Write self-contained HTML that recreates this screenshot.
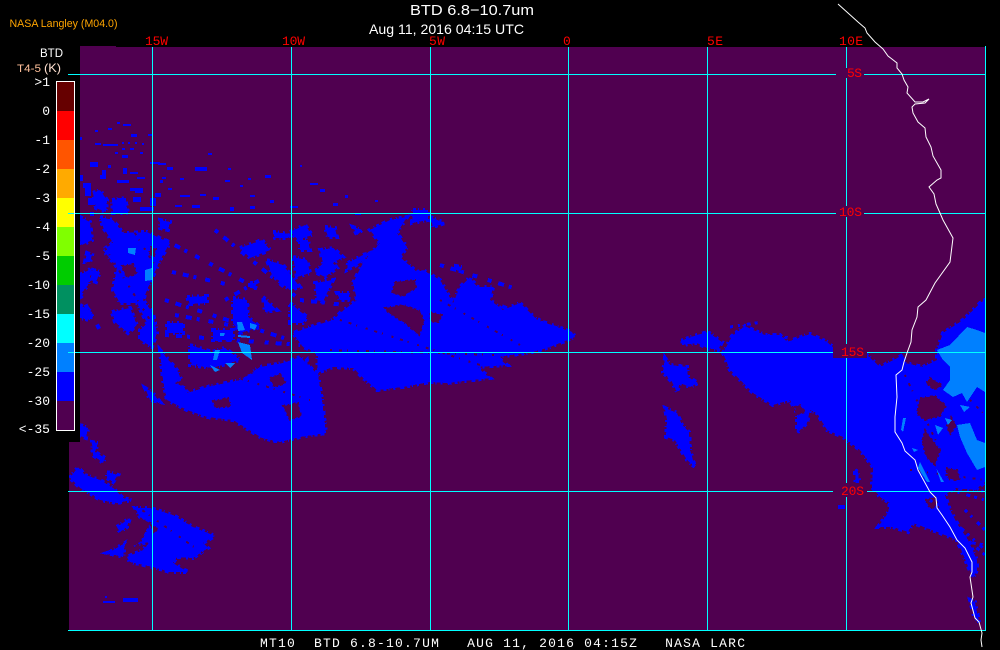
<!DOCTYPE html>
<html><head><meta charset="utf-8"><style>
html,body{margin:0;padding:0;background:#000;width:1000px;height:650px;overflow:hidden}
svg{display:block}
text{font-family:"Liberation Sans",sans-serif;fill:#fff}
.m{font-family:"Liberation Mono",monospace;font-size:13px}
.r{fill:#f00}
</style></head><body>
<svg width="1000" height="650" viewBox="0 0 1000 650" xmlns="http://www.w3.org/2000/svg">
<defs><clipPath id="map"><path d="M80 46H116V47H985V630H69V442H80Z"/></clipPath></defs>
<rect width="1000" height="650" fill="#000"/>
<g shape-rendering="crispEdges">
<path fill="#500050" d="M80 46H116V47H985V630H69V442H80Z"/>
<g clip-path="url(#map)">
<!-- blue masses -->
<g fill="#00f" stroke="#00f" stroke-width="4" stroke-dasharray="3 2 1 4 2 5 4 3">
<path d="M318 353L317 373L333 367L353 368L362 377L377 390L403 387L430 382L447 383L490 378L477 367L507 365L497 357L533 352L550 347L575 337L572 332L537 320L520 303L503 310L490 300L493 287L477 287L470 277L460 287L453 303L440 280L423 270L417 272L400 257L407 247L397 233L407 217L390 220L370 230L380 243L363 263L353 283L357 300L340 313L333 320L310 327L293 333L303 347Z"/>
<path d="M100 217L113 220L123 233L147 232L170 243L160 260L150 283L143 300L153 313L157 333L152 347L140 340L140 330L147 323L137 303L120 303L113 290L117 267L103 250L113 243L103 227Z"/>
<path d="M112 312L130 308L137 325L128 333L115 322Z"/>
<path d="M160 350L177 370L187 393L207 387L240 380L260 367L283 363L300 357L318 375L322 400L326 433L300 437L280 442L262 438L233 420L207 417L187 410L167 400L163 380Z"/>
<path d="M145 388L152 392L160 402L150 400Z"/>
<path d="M233 298L247 300L248 317L260 327L240 333L233 323Z"/>
<path d="M263 297L277 310L265 312Z"/>
<path d="M267 260L283 265L300 287L290 290L272 275Z"/>
<path d="M80 217L90 222L92 240L82 245L80 240Z"/>
<path d="M80 275L92 268L88 285L80 295Z"/>
<path d="M80 305L92 312L90 320L80 318Z"/>
<path d="M87 253L92 255L90 262L85 262Z"/>
<path d="M93 270L100 272L96 282L90 280Z"/>
<path d="M187 297L207 296L207 303L190 304Z"/>
<path d="M213 330L233 330L233 340L213 340Z"/>
<path d="M167 323L183 323L183 333L167 333Z"/>
<path d="M190 345L212 352L225 348L240 360L212 368L190 365Z"/>
<path d="M273 232L290 234L288 238L275 238Z"/>
<path d="M160 220L170 222L168 230L160 228Z"/>
<path d="M250 283L256 283L255 288L250 288Z"/>
<path d="M325 227L335 228L337 237L328 237Z"/>
<path d="M300 240L308 240L310 250L300 250Z"/>
<path d="M320 250L333 248L343 257L333 263L337 268L325 277L315 272L323 263Z"/>
<path d="M293 257L307 260L310 273L297 277Z"/>
<path d="M353 227L362 230L357 235Z"/>
<path d="M315 283L333 280L323 302L317 300Z"/>
<path d="M337 293L350 293L348 300L340 300Z"/>
<path d="M290 303L307 317L303 323L290 323Z"/>
<path d="M348 263L363 255L370 253L360 263L347 270Z"/>
<path d="M293 373L307 360L310 377L318 397L297 397Z"/>
<path d="M430 217L445 223L433 227Z"/>
<path d="M413 210L428 210L428 220L412 223Z"/>
<path d="M456 266L462 267L460 271L456 270Z"/>
<path d="M290 232L305 225L312 235L298 240Z"/>
<path d="M240 248L262 240L270 250L250 258Z"/>
<path d="M93 193L100 190L107 200L106 212L96 208Z"/>
<path d="M112 200L125 198L128 213L113 213Z"/>
<path d="M665 358L670 365L687 367L688 377L698 383L690 387L680 383L677 392L672 382L663 372Z"/>
<path d="M665 408L677 413L682 425L689 432L690 450L695 467L687 460L675 440L666 437L667 420Z"/>
<path d="M708 332L722 342L718 350L707 348L697 343L682 345L683 340L697 335Z"/>
<path d="M723 353L732 336L745 326L753 330L765 335L780 335L787 342L810 334L827 342L840 353L867 355L880 367L903 355L905 363L923 367L937 360L937 350L943 333L963 320L980 303L985 300V482L975 490L955 488L945 495L950 510L958 525L968 540L977 560L977 570L973 578L957 540L940 533L913 523L908 532L893 527L878 527L888 513L890 503L880 497L872 487L873 467L860 450L843 437L827 430L817 413L810 410L807 423L797 433L797 413L790 400L773 405L753 393L740 380L730 370Z"/>
<path d="M970 600L975 602L979 622L974 616Z"/>
<path d="M855 470L858 472L860 490L856 490Z"/>
<path d="M70 478L78 467L85 475L100 480L113 488L123 498L132 500L117 503L100 500L93 495L80 488Z"/>
<path d="M107 472L118 475L113 482L107 478Z"/>
<path d="M92 442L98 443L95 452L105 458L103 463L93 455Z"/>
<path d="M80 425L88 428L86 438L80 436Z"/>
<path d="M135 508L150 508L173 515L193 527L215 536L203 543L208 548L193 558L177 557L173 563L188 572L170 572L153 567L130 562L127 557L143 550L150 542L133 545L140 535L148 523L140 517Z"/>
<path d="M117 527L130 518L127 527L120 532Z"/>
<path d="M110 552L125 543L123 557L107 553Z"/>
</g>
<path fill="#00f" d="M103 601h12v2h-12zM123 598h15v4h-15zM105 596h2v2h-2zM838 505h7v4h-7z"/>
<!-- hand-placed top-left speckle -->
<path fill="#00f" d="M117 122h3v2h-3zM123 124h8v2h-8zM108 128h4v2h-4zM131 134h6v3h-6zM148 134h5v2h-5zM80 137h2v3h-2zM95 143h6v2h-6zM103 144h15v2h-15zM122 142h2v2h-2zM128 142h2v2h-2zM135 142h2v2h-2zM142 143h2v2h-2zM122 148h3v2h-3zM130 148h4v2h-4zM140 152h3v2h-3zM122 155h6v3h-6zM115 152h3v2h-3zM90 162h8v5h-8zM108 165h3v3h-3zM123 168h4v6h-4zM130 172h8v2h-8zM102 170h4v6h-4zM100 175h6v4h-6zM80 175h3v6h-3zM83 183h8v5h-8zM117 180h12v3h-12zM137 177h8v2h-8zM150 162h10v2h-10zM158 163h8v2h-8zM167 167h6v3h-6zM195 167h12v4h-12zM208 153h4v2h-4zM180 178h4v2h-4zM162 177h4v2h-4zM265 175h6v3h-6zM310 183h8v2h-8zM320 189h5v3h-5zM333 203h5v3h-5zM355 213h6v2h-6zM130 188h6v3h-6zM135 188h8v5h-8zM118 198h8v4h-8zM133 197h8v5h-8zM150 198h6v8h-6zM155 193h6v4h-6zM140 207h14v4h-14zM168 188h4v2h-4zM180 195h10v2h-10zM200 194h6v2h-6zM213 197h6v3h-6zM230 207h4v4h-4zM248 178h3v2h-3zM290 206h8v2h-8zM95 130h3v2h-3zM85 188h6v8h-6zM88 198h7v7h-7zM160 180h3v3h-3zM225 180h5v2h-5zM240 185h3v2h-3zM250 195h5v2h-5zM270 200h4v3h-4zM175 205h7v2h-7zM192 205h8v3h-8zM250 206h5v3h-5zM300 165h2v2h-2zM228 168h3v2h-3zM345 195h3v3h-3zM375 200h3v2h-3zM90 212h4v4h-4z"/>
<!-- holes -->
<g fill="#500050" stroke="#500050" stroke-width="2" stroke-dasharray="2 3 1 4 3 2">
<path d="M395 282L415 280L416 288L403 296L392 293Z"/>
<path d="M385 308L403 305L420 311L424 322L419 335L405 323L389 313Z"/>
<path d="M430 312L442 315L438 323L431 321Z"/>
<path d="M920 398L935 396L946 406L940 416L925 420L917 414Z"/>
<path d="M925 430L932 440L940 450L935 465L927 458L922 442Z"/>
<path d="M946 468L957 470L960 480L949 480Z"/>
<path d="M930 378L942 385L935 390L926 383Z"/>
<path d="M951 417L956 425L950 435L947 425Z"/>
<path d="M925 500L935 497L938 507L930 508Z"/>
<path d="M177 383L189 375L196 380L187 387Z"/>
<path d="M238 372L248 368L254 372L242 377Z"/>
<path d="M270 378L280 374L286 383L274 387Z"/>
<path d="M213 401L228 398L231 406L216 408Z"/>
<path d="M283 406L298 403L301 416L290 420Z"/>
<path d="M122 266L133 264L137 274L126 277Z"/>
<path d="M151 247L156 249L154 256L149 254Z"/>
<path d="M140 518L150 523L140 542L128 549L125 545L135 530Z"/>
<path d="M150 525L158 528L154 533Z"/>
<path d="M795 407L800 405L805 412L797 415Z"/>
</g>
<!-- fuzz -->
<g fill="none" stroke="#00f">
<path stroke-width="4" stroke-dasharray="4 7 6 5 3 9 5 11" d="M165 300L290 340M165 335L300 345M215 230L300 300M165 240L260 290M172 272L230 285M80 295L100 330M225 300L260 280M175 315L230 325M300 300L345 305M440 265L520 290M470 295L540 320M520 315L575 335"/>
<path stroke-width="3" stroke-dasharray="3 5 2 7 4 4" d="M730 327L762 322M735 332L790 338M930 500L985 550M945 520L985 555M950 490L985 500M965 510L985 530M950 480L985 492M955 540L985 545"/>
</g>
<g fill="none" stroke="#500050">
<path stroke-width="2" stroke-dasharray="2 7 3 5 1 9" d="M330 350L500 355M340 320L480 365M440 300L520 345M905 375L940 450M970 400L985 415M910 470L985 480M180 360L310 400M130 225L170 290M135 505L205 555M100 240L150 320"/>
</g>
<!-- lighter blue -->
<g fill="#0080ff">
<path d="M937 350L950 345L967 327L977 330L985 333V392L977 387L967 402L962 393L953 397L943 390L950 380L950 367L943 360Z"/>
<path d="M957 425L970 423L977 440L985 443V467L977 470L967 453L960 437Z"/>
<path d="M128 248L136 248L135 255L128 253Z"/>
<path d="M145 270L152 268L152 280L145 281Z"/>
<path d="M237 322L242 322L245 330L238 331Z"/>
<path d="M250 323L257 325L255 330L250 328Z"/>
<path d="M238 342L250 345L252 360L242 353Z"/>
<path d="M215 350L220 350L217 360L213 360Z"/>
<path d="M225 363L235 363L230 368Z"/>
<path d="M210 365L220 370L215 372Z"/>
<path d="M220 333L225 333L224 336L220 336Z"/>
<path d="M238 335L250 336L250 338L238 337Z"/>
<path d="M903 418L906 418L903 432L901 430Z"/>
<path d="M912 448L918 450L914 452Z"/>
<path d="M920 462L930 482L927 482L918 468Z"/>
<path d="M936 468L944 482L941 482Z"/>
<path d="M935 425L943 428L938 435Z"/>
<path d="M945 418L952 420L948 425Z"/>
<path d="M960 405L970 407L964 412Z"/>
</g>
</g>
<!-- grid -->
<g fill="#0ff">
<rect x="68" y="74" width="917" height="1"/>
<rect x="68" y="213" width="917" height="1"/>
<rect x="68" y="352" width="917" height="1"/>
<rect x="68" y="491" width="917" height="1"/>
<rect x="68" y="630" width="918" height="1"/>
<rect x="152" y="47" width="1" height="584"/>
<rect x="291" y="47" width="1" height="584"/>
<rect x="430" y="47" width="1" height="584"/>
<rect x="568" y="47" width="1" height="584"/>
<rect x="707" y="47" width="1" height="584"/>
<rect x="846" y="47" width="1" height="584"/>
<rect x="985" y="46" width="1" height="585"/>
</g>
<!-- label boxes -->
<g fill="#500050">
<rect x="836" y="68" width="28" height="10"/>
<rect x="836" y="206" width="28" height="11"/>
<rect x="833" y="344" width="34" height="14"/>
<rect x="833" y="483" width="34" height="14"/>
</g>
<!-- colour bar -->
<rect x="56" y="81" width="19" height="350" fill="#fff"/>
<rect x="57" y="82" width="17" height="29" fill="#660000"/>
<rect x="57" y="111" width="17" height="29" fill="#f00"/>
<rect x="57" y="140" width="17" height="29" fill="#f50"/>
<rect x="57" y="169" width="17" height="29" fill="#fa0"/>
<rect x="57" y="198" width="17" height="29" fill="#ff0"/>
<rect x="57" y="227" width="17" height="29" fill="#80ff00"/>
<rect x="57" y="256" width="17" height="29" fill="#0c0"/>
<rect x="57" y="285" width="17" height="29" fill="#009060"/>
<rect x="57" y="314" width="17" height="29" fill="#0ff"/>
<rect x="57" y="343" width="17" height="29" fill="#0080ff"/>
<rect x="57" y="372" width="17" height="29" fill="#00f"/>
<rect x="57" y="401" width="17" height="29" fill="#500050"/>
<rect x="68" y="213" width="6" height="1" fill="#0ff"/>
<rect x="68" y="352" width="6" height="1" fill="#0ff"/>
</g>
<!-- coast -->
<path fill="none" stroke="#fff" stroke-width="1" d="M838 4L848 13L858 22L865 28L867 33L875 42L883 49L888 56L897 63L897 68L902 74L904 80L908 87L907 93L915 102L923 102L929 99L925 103L915 104L912 107L913 113L918 122L925 128L926 137L931 147L933 156L941 170L941 178L937 180L929 187L934 194L936 204L940 213L943 220L953 238L950 262L935 283L926 300L918 307L917 317L912 330L911 342L907 353L904 362L902 370L896 375L897 397L895 417L895 432L902 443L905 451L915 460L918 470L930 492L936 498L937 508L942 515L950 527L957 540L965 548L972 562L972 572L970 577L973 597L971 603L975 618L979 622L982 633L981 640L982 647"/>
<!-- text -->
<text x="410" y="15" font-size="15" textLength="124" lengthAdjust="spacingAndGlyphs">BTD 6.8−10.7um</text>
<text x="369" y="34" font-size="14" textLength="155" lengthAdjust="spacingAndGlyphs">Aug 11, 2016 04:15 UTC</text>
<text x="9.5" y="27" font-size="11" style="fill:#ffa500" textLength="108" lengthAdjust="spacingAndGlyphs">NASA Langley (M04.0)</text>
<text x="40" y="57" font-size="12" textLength="23" lengthAdjust="spacingAndGlyphs">BTD</text>
<text x="17" y="72" font-size="11" style="fill:#ffc09a" textLength="24" lengthAdjust="spacingAndGlyphs">T4-5</text>
<text x="44" y="72" font-size="12" style="fill:#ffe0d0" textLength="17" lengthAdjust="spacingAndGlyphs">(K)</text>
<g class="m" text-anchor="end">
<text class="m" x="50" y="86" text-anchor="end">&gt;1</text>
<text class="m" x="50" y="115" text-anchor="end">0</text>
<text class="m" x="50" y="144" text-anchor="end">-1</text>
<text class="m" x="50" y="173" text-anchor="end">-2</text>
<text class="m" x="50" y="202" text-anchor="end">-3</text>
<text class="m" x="50" y="231" text-anchor="end">-4</text>
<text class="m" x="50" y="260" text-anchor="end">-5</text>
<text class="m" x="50" y="289" text-anchor="end">-10</text>
<text class="m" x="50" y="318" text-anchor="end">-15</text>
<text class="m" x="50" y="347" text-anchor="end">-20</text>
<text class="m" x="50" y="376" text-anchor="end">-25</text>
<text class="m" x="50" y="405" text-anchor="end">-30</text>
<text class="m" x="50" y="433" text-anchor="end">&lt;-35</text>
</g>
<text class="m r" x="145" y="45" textLength="23">15W</text>
<text class="m r" x="282" y="45" textLength="23">10W</text>
<text class="m r" x="429" y="45" textLength="16">5W</text>
<text class="m r" x="563" y="45" textLength="8">0</text>
<text class="m r" x="707" y="45" textLength="16">5E</text>
<text class="m r" x="839" y="45" textLength="24">10E</text>
<text class="m r" x="847" y="77" textLength="15">5S</text>
<text class="m r" x="839" y="216" textLength="23">10S</text>
<text class="m r" x="841" y="356" textLength="23">15S</text>
<text class="m r" x="841" y="495" textLength="23">20S</text>
<text class="m" x="260" y="647" textLength="485" xml:space="preserve">MT10  BTD 6.8-10.7UM   AUG 11, 2016 04:15Z   NASA LARC</text>
</svg>
</body></html>
